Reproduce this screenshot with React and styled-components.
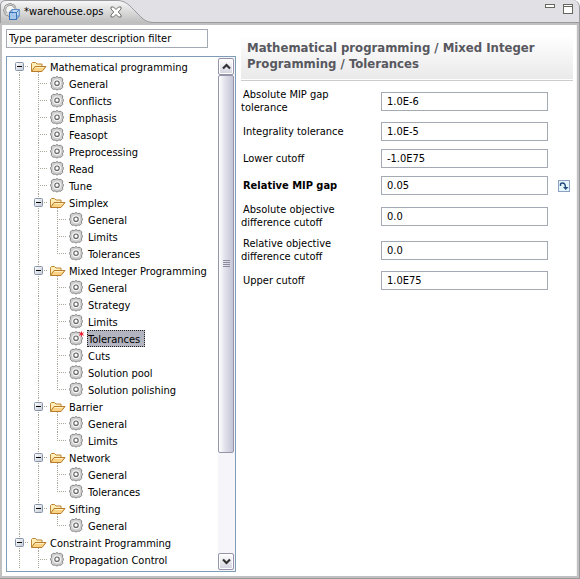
import React, { useState } from "react";
import styled, { createGlobalStyle } from "styled-components";

const GlobalStyle = createGlobalStyle`
  *, *::before, *::after { box-sizing: border-box; }
  body { margin: 0; background: #fff; }
  body, button, input {
    font-family: "DejaVu Sans Condensed", "DejaVu Sans", sans-serif;
    font-size: 11px;
    color: #000;
  }
  button { padding: 0; }
`;

const Editor = styled.main`
  display: flex;
  flex-direction: column;
  min-height: 100vh;
  background: #e0e0e5;
  border: solid #9a9a9e;
  border-width: 0 1px 1px 0;
  border-top-right-radius: 7px;
`;

const TabBar = styled.header`
  display: flex;
  justify-content: space-between;
  height: 23px;
  border-bottom: 1px solid #9a9a9e;
`;

const Tab = styled.div`
  position: relative;
  display: flex;
  align-items: center;
  gap: 4px;
  width: 150px;
  height: 23px;
  padding-left: 3px;
`;

const TabShape = styled.svg`
  position: absolute;
  inset: 0;
`;

const TabTitle = styled.span`
  position: relative;
  width: 82px;
  line-height: 16px;
  white-space: nowrap;
`;

const IconButton = styled.button`
  position: relative;
  display: flex;
  border: 0;
  background: none;
`;

const TabIcon = styled.svg`
  position: relative;
  flex: none;
`;

const WindowButtons = styled.div`
  display: flex;
  align-items: flex-start;
  gap: 8px;
  padding: 4px 6px 0 0;
`;

const Body = styled.div`
  flex: 1;
  display: grid;
  grid-template-columns: 230px minmax(0, 1fr);
  column-gap: 5px;
  padding: 4px;
  background: #fff;
  border: 2px solid #c0c0c0;
  box-shadow: inset -1px 0 0 #f4f4f4;
`;

const Navigator = styled.section`
  display: flex;
  flex-direction: column;
  gap: 8px;
`;

const TextBox = styled.input`
  width: 100%;
  height: 19px;
  padding: 0 5px;
  border: 1px solid #a3aab3;
  border-radius: 0;
  background: #fff;
  outline: 0;
`;

const FilterBox = styled(TextBox)`
  width: 202px;
  padding: 0 2px;
`;

const TreePanel = styled.div`
  flex: 1;
  display: flex;
  border: 1px solid #7f9db9;
`;

const Tree = styled.ul`
  flex: 1;
  min-width: 0;
  margin: 0;
  padding: 1px 0 0 3px;
  list-style: none;
  overflow: hidden;
`;

const Row = styled.li`
  display: flex;
  align-items: center;
  height: 17px;
`;

const dots = (dir) =>
  `repeating-linear-gradient(${dir}, #aca899 0 1px, transparent 1px 2px)`;

const Guide = styled.span`
  flex: none;
  display: flex;
  align-items: center;
  justify-content: center;
  width: 19px;
  height: 17px;
  background-image: ${(p) => (p.$line === "none" ? "none" : dots("to bottom"))},
    ${(p) => (p.$branch ? dots("to right") : "none")};
  background-repeat: no-repeat;
  background-position: 9px ${(p) => (p.$line === "lower" ? "8px" : "0")}, 9px 8px;
  background-size: 1px ${(p) => (p.$line === "upper" ? "9px" : "17px")}, 10px 1px;
`;

const Toggle = styled.button`
  display: flex;
  border: 0;
  background: none;
`;

const Slot = styled.span`
  flex: none;
  display: flex;
  align-items: center;
  width: 20px;
  height: 17px;
  padding-left: ${(p) => (p.$open ? "1px" : "2px")};
  background-image: ${(p) => (p.$open ? dots("to bottom") : "none")};
  background-repeat: no-repeat;
  background-position: 9px 14px;
  background-size: 1px 3px;
`;

const ItemLabel = styled.button`
  height: 17px;
  padding: 2px 4px 0 0;
  line-height: 13px;
  white-space: nowrap;
  border: 1px dotted ${(p) => (p.$selected ? "#222" : "transparent")};
  background: ${(p) => (p.$selected ? "#b2b4bf" : "transparent")};
`;

const ScrollBar = styled.div`
  display: flex;
  flex-direction: column;
  width: 17px;
  padding: 1px 1px 1px 0;
  background: #f5f5fa;
`;

const ScrollButton = styled.button`
  display: flex;
  align-items: center;
  justify-content: center;
  height: 17px;
  border: 1px solid #9495a8;
  border-radius: 2px;
  background: linear-gradient(#fff, #d3d3e0);
  box-shadow: inset 0 0 0 1px #fff;
`;

const ScrollTrack = styled.div`
  flex: 1;
`;

const ScrollThumb = styled.div`
  display: flex;
  align-items: center;
  justify-content: center;
  height: 79%;
  border: 1px solid #9495a8;
  border-radius: 2px;
  background: linear-gradient(to right, #fff, #e6e6ef 35%, #c4c5d6);
`;

const Details = styled.section`
  padding-top: 6px;
`;

const Heading = styled.h1`
  margin: 0;
  padding: 5px 6px;
  min-height: 44px;
  font-size: 13px;
  line-height: 16px;
  font-weight: bold;
  color: #58585f;
  background: linear-gradient(#fff, #e9e9e9);
`;

const Rule = styled.div`
  height: 2px;
  border-bottom: 1px solid #ccc;
`;

const Form = styled.form`
  display: flex;
  flex-direction: column;
  gap: 8px;
  padding-top: 7px;
`;

const Field = styled.div`
  display: grid;
  grid-template-columns: 130px minmax(0, 1fr) 15px;
  column-gap: 10px;
  align-items: center;
`;

const FieldLabel = styled.label`
  line-height: 13px;
  text-indent: 2px;
  font-weight: ${(p) => (p.$changed ? "bold" : "normal")};
`;

const GearGlyph = ({ changed }) => (
  <svg width="16" height="16" viewBox="0 0 16 16" aria-hidden="true">
    <path
      d="M5.500 1.500 6 .8h2L8.500 1.500 11 1.300 12.700 3 12.500 5.500l.8.7v2l-.8.8.2 2.500L11 13.200l-2.500-.2-.5.800H6L5.500 13 3 13.200 1.300 11.500 1.500 9 .7 8.200v-2l.8-.7L1.300 3 3 1.300z"
      fill="#cfcfcf"
      stroke="#8a8a8a"
    />
    <circle cx="7" cy="7.200" r="4" fill="#f4f4f4" />
    <circle cx="7" cy="7.200" r="2.200" fill="#fff" stroke="#666" strokeWidth="1.200" />
    {changed && (
      <path d="M12.500 .5v5M10.300 1.700l4.400 2.600M14.700 1.700l-4.400 2.600" stroke="#ee1c2e" />
    )}
  </svg>
);

const FolderGlyph = () => (
  <svg width="17" height="14" viewBox="0 0 17 14" aria-hidden="true">
    <path d="M1.500 11V3.500l1-1h3l1.500 1.500h5v3" fill="#ffeeb8" stroke="#bd8434" />
    <path d="M1.500 11.500 5 6.500h11l-4 5z" fill="#fbd384" stroke="#b87a2b" strokeLinejoin="round" />
    <path d="M5.500 7.500h8.500" stroke="#fff0c2" />
  </svg>
);

const MinusGlyph = () => (
  <svg width="9" height="9" viewBox="0 0 9 9" aria-hidden="true">
    <defs>
      <linearGradient id="toggleFill" x2="1" y2="1">
        <stop stopColor="#fff" />
        <stop offset="1" stopColor="#c3cad6" />
      </linearGradient>
    </defs>
    <rect x=".5" y=".5" width="8" height="8" rx="1" fill="url(#toggleFill)" stroke="#8794a8" />
    <path d="M2 4.500h5" stroke="#000" />
  </svg>
);

const Chevron = ({ down }) => (
  <svg width="9" height="7" viewBox="0 0 9 7" aria-hidden="true">
    <path d={down ? "M1 1.500 4.500 5 8 1.500" : "M1 5.500 4.500 2 8 5.500"} fill="none" stroke="#333" strokeWidth="2.200" />
  </svg>
);

const OpsGlyph = () => (
  <TabIcon width="17" height="17" viewBox="0 0 17 17" aria-hidden="true">
    <path
      d="M5 1.500 6 .6h2.500L9 1.700l1.700-.2 1.500 1.300-.2 1.400 1 1.300V8L8 13.500H5.500L5 12.500l-1.700.1L1.800 11l.2-1.600-1.300-.9V6l1.200-.9-.2-1.700L3.200 1.800z"
      fill="#d9d9d9"
      stroke="#929292"
    />
    <path d="M4 10a4.500 4.500 0 1 1 7.500-4.500" fill="#f6f6f6" stroke="#999" />
    <path d="M6.500 10 9 6.500h7.300L16 13l-2.500 3.300z" fill="#c3dcf6" />
    <path d="M9 6.500h7.300V13M9 6.500V13h7.300" fill="none" stroke="#5b8cc7" />
    <rect x="6.500" y="9.500" width="7" height="7" fill="#a5c8ef" fillOpacity=".85" stroke="#3c74b8" />
    <path d="M6.500 9.500 9 6.500M13.500 9.500l2.800-3M13.500 16.300l2.800-3.300" stroke="#4c80c0" />
  </TabIcon>
);

const RevertGlyph = () => (
  <svg width="12" height="12" viewBox="0 0 12 12" aria-hidden="true">
    <rect x=".5" y=".5" width="11" height="11" fill="#e4f5fc" stroke="#8ba0c2" />
    <path d="M2.500 6V4.500Q2.500 3 4.500 3 7.500 3 7.500 8" fill="none" stroke="#234a7c" strokeWidth="1.400" />
    <path d="M5 7h5.500l-2.800 3z" fill="#234a7c" />
  </svg>
);

/* Each entry: depth, label, kind, guide shape for every column to its left. */
const f = (depth, label, guides) => ({ depth, label, folder: true, guides });
const g = (label, guides) => ({ label, guides });

const items = [
  f(0, "Mathematical programming", ["lower"]),
  ...["General", "Conflicts", "Emphasis", "Feasopt", "Preprocessing", "Read", "Tune"].map((t) =>
    g(t, ["full", "full"])
  ),
  f(1, "Simplex", ["full", "full"]),
  g("General", ["full", "full", "full"]),
  g("Limits", ["full", "full", "full"]),
  g("Tolerances", ["full", "full", "upper"]),
  f(1, "Mixed Integer Programming", ["full", "full"]),
  g("General", ["full", "full", "full"]),
  g("Strategy", ["full", "full", "full"]),
  g("Limits", ["full", "full", "full"]),
  { ...g("Tolerances", ["full", "full", "full"]), changed: true },
  g("Cuts", ["full", "full", "full"]),
  g("Solution pool", ["full", "full", "full"]),
  g("Solution polishing", ["full", "full", "upper"]),
  f(1, "Barrier", ["full", "full"]),
  g("General", ["full", "full", "full"]),
  g("Limits", ["full", "full", "upper"]),
  f(1, "Network", ["full", "full"]),
  g("General", ["full", "full", "full"]),
  g("Tolerances", ["full", "full", "upper"]),
  f(1, "Sifting", ["full", "upper"]),
  g("General", ["full", "none", "upper"]),
  f(0, "Constraint Programming", ["full"]),
  g("Propagation Control", ["full", "full"]),
];

const fields = [
  { id: "absMipGap", label: "Absolute MIP gap tolerance", value: "1.0E-6" },
  { id: "integrality", label: "Integrality tolerance", value: "1.0E-5" },
  { id: "lowerCutoff", label: "Lower cutoff", value: "-1.0E75" },
  { id: "relMipGap", label: "Relative MIP gap", value: "0.05", changed: true },
  { id: "absDiff", label: "Absolute objective difference cutoff", value: "0.0" },
  { id: "relDiff", label: "Relative objective difference cutoff", value: "0.0" },
  { id: "upperCutoff", label: "Upper cutoff", value: "1.0E75" },
];

function TreeRow({ item, selected, onSelect }) {
  const last = item.guides.length - 1;
  return (
    <Row role="treeitem" aria-level={last + 1} aria-selected={selected}>
      {item.guides.map((line, i) => (
        <Guide key={i} $line={line} $branch={i === last}>
          {item.folder && i === last && (
            <Toggle type="button" aria-label={`Collapse ${item.label}`}>
              <MinusGlyph />
            </Toggle>
          )}
        </Guide>
      ))}
      <Slot $open={item.folder}>
        {item.folder ? <FolderGlyph /> : <GearGlyph changed={item.changed} />}
      </Slot>
      <ItemLabel type="button" $selected={selected} onClick={onSelect}>
        {item.label}
      </ItemLabel>
    </Row>
  );
}

export default function App() {
  const [selected, setSelected] = useState(16);
  return (
    <>
      <GlobalStyle />
      <Editor>
        <TabBar>
          <Tab>
            <TabShape width="154" height="23" viewBox="0 0 154 23" aria-hidden="true">
              <defs>
                <linearGradient id="tabFill" x2="0" y2="1">
                  <stop stopColor="#f8f8f8" />
                  <stop offset="1" stopColor="#bdbdbd" />
                </linearGradient>
              </defs>
              <path
                d="M0 23V5Q1 .5 6 .5H117C126 .5 130 6 136 12S145 22.500 154 22.500V23z"
                fill="url(#tabFill)"
              />
              <path
                d="M.5 23V5Q1 .5 6 .5H117C126 .5 130 6 136 12S145 22.500 154 22.500"
                fill="none"
                stroke="#9a9a9e"
              />
            </TabShape>
            <OpsGlyph />
            <TabTitle>*warehouse.ops</TabTitle>
            <IconButton type="button" aria-label="Close">
              <svg width="12" height="12" viewBox="0 0 12 12" aria-hidden="true">
                <path
                  d="M1 1h2.500L6 3.500 8.500 1H11v2L8.300 6 11 9v2H8.500L6 8.500 3.500 11H1V9l2.700-3L1 3z"
                  fill="#fff"
                  stroke="#6f6f66"
                />
              </svg>
            </IconButton>
          </Tab>
          <WindowButtons>
            <IconButton type="button" aria-label="Minimize">
              <svg width="10" height="10" viewBox="0 0 10 10" aria-hidden="true">
                <rect x=".5" y=".5" width="9" height="3" fill="#fff" stroke="#66665e" />
              </svg>
            </IconButton>
            <IconButton type="button" aria-label="Maximize">
              <svg width="10" height="10" viewBox="0 0 10 10" aria-hidden="true">
                <rect x=".5" y=".5" width="9" height="9" fill="#fff" stroke="#66665e" />
                <path d="M1 2.500h8" stroke="#66665e" />
              </svg>
            </IconButton>
          </WindowButtons>
        </TabBar>
        <Body>
          <Navigator>
            <FilterBox aria-label="Parameter filter" defaultValue="Type parameter description filter" />
            <TreePanel>
              <Tree role="tree" aria-label="Parameters">
                {items.map((item, i) => (
                  <TreeRow key={i} item={item} selected={i === selected} onSelect={() => setSelected(i)} />
                ))}
              </Tree>
              <ScrollBar>
                <ScrollButton type="button" aria-label="Scroll up">
                  <Chevron />
                </ScrollButton>
                <ScrollTrack>
                  <ScrollThumb>
                    <svg width="7" height="8" viewBox="0 0 7 8" aria-hidden="true">
                      <path d="M0 .5h7M0 2.500h7M0 4.500h7M0 6.500h7" stroke="#8a8b9c" />
                    </svg>
                  </ScrollThumb>
                </ScrollTrack>
                <ScrollButton type="button" aria-label="Scroll down">
                  <Chevron down />
                </ScrollButton>
              </ScrollBar>
            </TreePanel>
          </Navigator>
          <Details>
            <Heading>Mathematical programming / Mixed Integer Programming / Tolerances</Heading>
            <Rule />
            <Form onSubmit={(e) => e.preventDefault()}>
              {fields.map((field) => (
                <Field key={field.id}>
                  <FieldLabel htmlFor={field.id} $changed={field.changed}>
                    {field.label}
                  </FieldLabel>
                  <TextBox id={field.id} defaultValue={field.value} />
                  {field.changed && (
                    <IconButton type="button" aria-label="Restore default value">
                      <RevertGlyph />
                    </IconButton>
                  )}
                </Field>
              ))}
            </Form>
          </Details>
        </Body>
      </Editor>
    </>
  );
}
